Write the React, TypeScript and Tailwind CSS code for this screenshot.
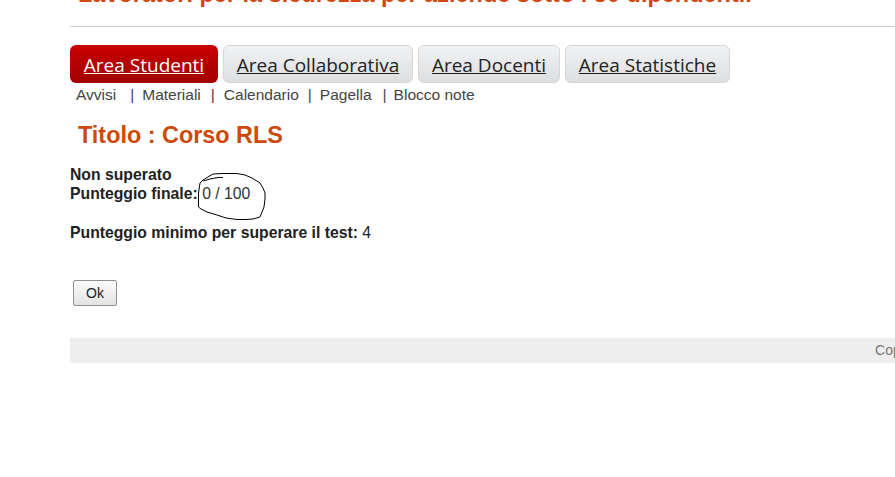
const sans = "font-['Liberation_Sans',Arial,sans-serif]";

const tabs = [
  { label: "Area Collaborativa", width: "w-[190px]" },
  { label: "Area Docenti", width: "w-[142px]" },
  { label: "Area Statistiche", width: "w-[165px]" },
];
const links = [
  { label: "Materiali", bar: "ml-[14px]", text: "ml-[8px]" },
  { label: "Calendario", bar: "ml-[10px]", text: "ml-[9px]" },
  { label: "Pagella", bar: "ml-[9px]", text: "ml-[8px]" },
  { label: "Blocco note", bar: "ml-[11px]", text: "ml-[7px]" },
];

export default function App() {
  return (
    <div className={`h-[477px] w-[895px] overflow-hidden bg-white pl-[70px] ${sans}`}>
      <div className="-mt-[16px] h-[43px] border-b border-[#cfcfcf] pl-2 text-[23.5px] leading-[20px] font-bold text-[#d2480f]">
        Lavoratori per la sicurezza per aziende sotto i 50 dipendenti.
      </div>

      <div className="mt-[18px] flex gap-[5px] font-['Open_Sans',sans-serif] text-[19px] leading-[40px]">
        <a className="h-[38px] w-[148px] rounded-[6px] bg-gradient-to-b from-[#c90000] to-[#a30000] text-center text-white underline">
          Area Studenti
        </a>
        {tabs.map((t) => (
          <a
            key={t.label}
            className={`h-[38px] ${t.width} rounded-[6px] border border-[#d4d6d8] bg-gradient-to-b from-[#f1f2f3] to-[#dcdee0] text-center leading-[38px] text-[#222] underline`}
          >
            {t.label}
          </a>
        ))}
      </div>

      <div className="mt-[2px] flex pl-1.5 text-[15.5px] leading-[20px] text-[#444]">
        <span>Avvisi</span>
        {links.map((l) => (
          <span key={l.label} className={l.bar}>
            |<span className={l.text}>{l.label}</span>
          </span>
        ))}
      </div>

      <h1 className="mt-[15px] pl-2 text-[23.4px] leading-[30px] font-bold text-[#cd4a0c]">Titolo : Corso RLS</h1>

      <div className="relative mt-[15px] text-[15.75px] leading-[19px] text-[#222]">
        <div className="font-bold">Non superato</div>
        <div>
          <span className="font-bold">Punteggio finale:</span> <span className="text-[#333]">0 / 100</span>
        </div>
        <div className="mt-[20px]">
          <span className="font-bold">Punteggio minimo per superare il test:</span> 4
        </div>
        {/* hand-drawn circle around the score */}
        <svg className="absolute top-[8px] left-[128px]" width="70" height="48" viewBox="0 0 70 48" fill="none">
          <path
            d="M2 10 L5 7 L10 4 L15 1 L25 0.5 L39 0.5 L47 2 L54 5 L62 10 L65 15 L67 20 L67 26 L66 34 L62 44 L55 46 L48 46.5 L39 46.5 L28 45 L19 42 L9 39 L3 36 L0.5 34 L0.5 28 L0.5 20 L2 10 M5 8 L12 6 L20 4.5 L25 4.5"
            stroke="#000"
            strokeWidth="1"
          />
        </svg>
      </div>

      <button className="mt-[38px] ml-[3px] h-[26px] w-[44px] rounded-[2px] border border-[#8f8f8f] bg-gradient-to-b from-[#fbfbfb] to-[#e4e4e4] text-[14px] text-[#222]">
        Ok
      </button>

      <div className="mt-[32px] flex h-[25px] justify-end overflow-hidden bg-[#eeeeee] text-[14px] leading-[25px] text-[#777]">
        <span className="-mr-[40px]">Copyright</span>
      </div>
    </div>
  );
}
